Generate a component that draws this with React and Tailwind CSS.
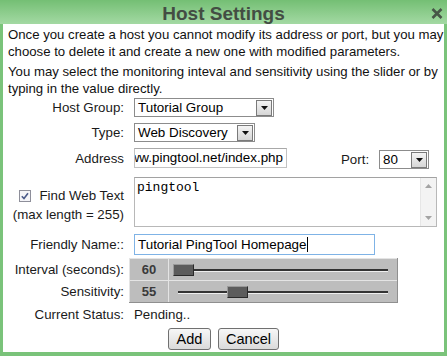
const FONT = { fontFamily: '"Liberation Sans", Arial, sans-serif' };

const Arrow = () => (
  <div className="w-[16px] h-[16px] border border-[#7a7a7a] bg-gradient-to-b from-[#f4f4f4] to-[#d6d6d6] flex items-center justify-center">
    <svg width="7" height="4" viewBox="0 0 7 4"><path d="M0 0h7L3.5 4z" fill="#111" /></svg>
  </div>
);

const Select = ({ value, w }) => (
  <div className={`${w} h-[19px] border border-[#8c8c8c] bg-white flex items-center justify-between pl-[3px] pr-px`}>
    <span className="text-[13.4px] leading-none text-black whitespace-nowrap">{value}</span>
    <Arrow />
  </div>
);

const Label = ({ children, className = '' }) => (
  <div className={`w-[121px] shrink-0 text-right text-[13.3px] leading-[17px] text-[#1a1a1a] whitespace-nowrap ${className}`}>{children}</div>
);

const SliderRow = ({ value, pos, start }) => (
  <div className="flex h-[22px]">
    <div className="w-[39px] border-t border-l border-[#e4e4e4] flex items-center justify-center text-[13px] font-bold text-[#3a3a3a]">{value}</div>
    <div className="flex-1 border-t border-l border-[#e4e4e4] relative">
      <div className="absolute top-[10px] h-[3px] bg-[#333] border-b border-[#eee]" style={{ left: start, right: 9 }} />
      <div className="absolute top-[5px] w-[21px] h-[12px] bg-[#5c5c5c] border border-t-[#9a9a9a] border-l-[#9a9a9a] border-r-[#2a2a2a] border-b-[#2a2a2a]" style={{ left: pos }} />
    </div>
  </div>
);

export default function App() {
  return (
    <div className="w-[447px] h-[356px] bg-[#7ac37a] flex flex-col overflow-hidden" style={FONT}>
      <div className="h-[24px] shrink-0 bg-gradient-to-b from-[#74bf74] to-[#a3d9a3] relative flex items-center justify-center">
        <span className="text-[19px] font-bold text-[#434d43] leading-none mt-[2px]">Host Settings</span>
        <svg className="absolute right-[4px] top-[8px]" width="12" height="11" viewBox="0 0 12 11">
          <path d="M1.5 1l9 9M10.5 1l-9 9" stroke="#475647" strokeWidth="2.6" />
        </svg>
      </div>
      <div className="flex-1 mx-[3px] mb-[4px] bg-white flex flex-col">
        <p className="pl-[5px] pt-[2px] text-[13.2px] leading-[17px] text-[#111] whitespace-nowrap">
          Once you create a host you cannot modify its address or port, but you may<br />
          choose to delete it and create a new one with modified parameters.
        </p>
        <p className="pl-[5px] mt-[3px] text-[13.2px] leading-[17px] text-[#111] whitespace-nowrap">
          You may select the monitoring inteval and sensitivity using the slider or by<br />
          typing in the value directly.
        </p>

        <div className="flex items-center mt-[1px] h-[19px]">
          <Label>Host Group:</Label>
          <div className="ml-[10px]"><Select value="Tutorial Group" w="w-[140px]" /></div>
        </div>
        <div className="flex items-center mt-[6px] h-[19px]">
          <Label>Type:</Label>
          <div className="ml-[10px]"><Select value="Web Discovery" w="w-[121px]" /></div>
        </div>
        <div className="flex items-center mt-[6px] h-[20px]">
          <Label>Address</Label>
          <div className="ml-[10px] w-[153px] h-[20px] border border-[#c2c2c2] border-t-[#a8a8a8] flex items-center justify-end overflow-hidden pr-[3px]">
            <span className="text-[13.4px] text-black whitespace-nowrap leading-none">www.pingtool.net/index.php</span>
          </div>
          <span className="ml-[54px] mt-[3px] text-[13.3px] text-[#1a1a1a]">Port:</span>
          <div className="ml-[10px] mt-[3px]"><Select value="80" w="w-[50px]" /></div>
        </div>

        <div className="flex mt-[9px] h-[50px]">
          <Label className="pt-[10px]">
            <span className="inline-flex items-center">
              <svg width="12" height="12" viewBox="0 0 12 12" className="mr-[8px]">
                <rect x="0.5" y="0.5" width="11" height="11" fill="#f4f4f8" stroke="#8e8f9a" />
                <path d="M2.8 6.2l2.2 2.4 4-5.4" fill="none" stroke="#4a5a8a" strokeWidth="1.6" />
              </svg>
              Find Web Text
            </span>
            <br />(max length = 255)
          </Label>
          <div className="ml-[10px] w-[303px] h-[50px] border border-[#b8b8b8] border-t-[#a2a2a2] flex">
            <div className="flex-1 pl-[2px] pt-[2px] text-[13px] leading-[16px] text-black" style={{ fontFamily: '"Liberation Mono", monospace' }}>pingtool</div>
            <div className="w-[16px] bg-[#f3f3f3] border-l border-[#e6e6e6] flex flex-col justify-between items-center py-[6px]">
              <svg width="7" height="4" viewBox="0 0 7 4"><path d="M0 4h7L3.5 0z" fill="#a3a3a3" /></svg>
              <svg width="7" height="4" viewBox="0 0 7 4"><path d="M0 0h7L3.5 4z" fill="#a3a3a3" /></svg>
            </div>
          </div>
        </div>

        <div className="flex items-center mt-[7px] h-[21px]">
          <Label>Friendly Name::</Label>
          <div className="ml-[10px] w-[241px] h-[21px] border border-[#7fb3e6] flex items-center pl-[3px]">
            <span className="text-[13.4px] text-black whitespace-nowrap leading-none">Tutorial PingTool Homepage</span>
            <span className="w-px h-[15px] bg-black ml-px" />
          </div>
        </div>

        <div className="flex mt-[3px]">
          <div className="flex flex-col">
            <Label className="h-[22px] flex items-center justify-end">Interval (seconds):</Label>
            <Label className="h-[22px] flex items-center justify-end">Sensitivity:</Label>
          </div>
          <div className="ml-[5px] w-[269px] bg-[#bdbdbd] border-r border-b border-[#8f8f8f] flex flex-col">
            <SliderRow value="60" pos={4} start={4} />
            <SliderRow value="55" pos={58} start={9} />
          </div>
        </div>

        <div className="flex items-center mt-[3px] h-[17px]">
          <Label>Current Status:</Label>
          <span className="ml-[10px] text-[13.3px] text-[#1a1a1a]">Pending..</span>
        </div>

        <div className="flex justify-center gap-[7px] mt-[5px]">
          <button className="w-[43px] h-[22px] rounded-[3px] border border-[#707070] bg-gradient-to-b from-[#f7f7f7] to-[#dadada] text-[14.5px] text-black leading-none">Add</button>
          <button className="w-[61px] h-[22px] rounded-[3px] border border-[#707070] bg-gradient-to-b from-[#f7f7f7] to-[#dadada] text-[14.5px] text-black leading-none">Cancel</button>
        </div>
      </div>
    </div>
  );
}
